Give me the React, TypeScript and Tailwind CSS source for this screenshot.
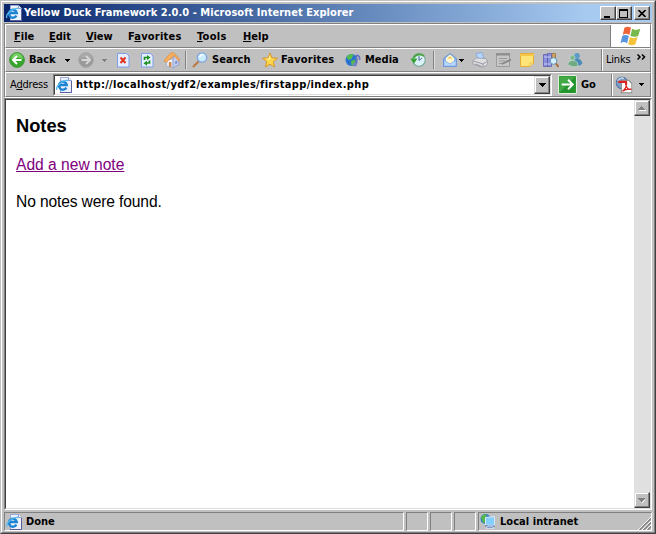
import React from "react";

type P = { children?: React.ReactNode; className?: string };

// 16px icon canvas shared by every toolbar drawing
function Icon({ children, className = "" }: P) {
  return (
    <svg viewBox="0 0 16 16" className={"h-4 w-4 shrink-0 " + className}>
      {children}
    </svg>
  );
}

function PageIcon({ className = "" }: P) {
  return (
    <Icon className={className}>
      <path d="M4.500 .5h8l3 3v12h-11z" fill="#edf1fb" stroke="#9aa8da" />
      <path d="M12.500 .5v3h3" fill="#fff" stroke="#8c9ad0" />
      <path d="M4 15.500h11.500V4" fill="none" stroke="#5a5f9e" />
      <path d="M10.400 10.600A4 4 0 1 1 10.800 8H4" fill="none" stroke="#1c84d2" strokeWidth="2.300" />
      <path d="M1 13C-1 10 7 2 12.500 3.500" fill="none" stroke="#53b8ee" strokeWidth="1.300" />
    </Icon>
  );
}

function DownTri({ className = "" }: P) {
  return (
    <svg viewBox="0 0 5 3" className={"h-[3px] w-[5px] shrink-0 " + className} shapeRendering="crispEdges">
      <path d="M0 0h5v1H0zM1 1h3v1H1zM2 2h1v1H2z" fill="currentColor" />
    </svg>
  );
}

function Round({ gray = false, className = "" }: { gray?: boolean; className?: string }) {
  return (
    <Icon className={className}>
      <circle cx="8" cy="8" r="7.400" fill={gray ? "#999" : "#36a52d"} stroke={gray ? "#aaa" : "#45973b"} />
      <path d="M2 7a6 6 0 0 1 12 0Q8 4 2 7" fill={gray ? "#adadad" : "#83da6e"} opacity=".8" />
      <path
        d={gray ? "M3.500 8h8M8 4l4 4-4 4" : "M12.500 8h-8M8 4L4 8l4 4"}
        fill="none"
        stroke={gray ? "#d6d6d6" : "#fff"}
        strokeWidth="2"
      />
    </Icon>
  );
}

function WinButton({ children, className = "" }: P) {
  return (
    <div
      className={
        "flex h-[14px] w-4 shrink-0 items-center justify-center border border-t-white border-l-white border-r-[#404040] border-b-[#404040] bg-[#c0c0c0] shadow-[inset_-1px_-1px_#808080] " +
        className
      }
    >
      {children}
    </div>
  );
}

function Divider({ className = "" }: P) {
  return <div className={"h-[18px] w-[2px] shrink-0 border-l border-[#808080] bg-[#dedede] " + className} />;
}

function Menu({ pre = "", hot, post, className = "" }: { pre?: string; hot: string; post: string; className?: string }) {
  return (
    <span className={"shrink-0 whitespace-nowrap " + className}>
      {pre}
      <u className="underline-offset-[1px]">{hot}</u>
      {post}
    </span>
  );
}

function ScrollButton({ up = false }: { up?: boolean }) {
  return (
    <div className="flex h-4 w-4 items-center justify-center border border-t-[#dedede] border-l-[#dedede] border-r-[#404040] border-b-[#404040] bg-[#c0c0c0] shadow-[inset_-1px_-1px_#808080,inset_1px_1px_#fff]">
      <svg viewBox="0 0 8 5" className="h-[5px] w-2" shapeRendering="crispEdges">
        <path d={up ? "M1 5h7v-1H1z" : "M4 4h1v1H4zM5 3h1v1H5zM6 2h1v1H6z"} fill="#fff" />
        <path d={up ? "M0 4h7V3H0zM1 3h5V2H1zM2 2h3V1H2zM3 1h1V0H3z" : "M0 0h7v1H0zM1 1h5v1H1zM2 2h3v1H2zM3 3h1v1H3z"} fill="#808080" />
      </svg>
    </div>
  );
}

function Pane({ children, className = "" }: P) {
  return (
    <div className={"flex h-[19px] items-center border border-t-[#808080] border-l-[#808080] border-r-white border-b-white " + className}>
      {children}
    </div>
  );
}

const ui = "font-['DejaVu_Sans_Condensed','DejaVu_Sans',sans-serif] text-[11px] leading-[14px] font-bold";
const plain = "font-['DejaVu_Sans_Condensed','DejaVu_Sans',sans-serif] text-[11px] leading-[14px] font-normal tracking-[-0.2px]";

export default function App() {
  return (
    <div
      className={
        "flex h-[534px] w-[656px] flex-col overflow-hidden border border-t-[#c0c0c0] border-l-[#c0c0c0] border-r-[#404040] border-b-[#404040] bg-[#c0c0c0] text-black " +
        ui
      }
    >
      <div className="flex min-h-0 flex-1 flex-col border border-t-white border-l-white border-r-[#808080] border-b-[#808080] px-[2px] pt-[2px]">
        <header className="flex h-[18px] w-[648px] shrink-0 items-center bg-linear-to-r from-[#0a246a] to-[#a6caf0] to-90% pr-[2px] pl-[2px] text-white">
          <PageIcon />
          <span className="ml-[2px] w-[331px] whitespace-nowrap tracking-[0.05px]">
            Yellow Duck Framework 2.0.0 - Microsoft Internet Explorer
          </span>
          <div className="ml-auto flex text-black">
            <WinButton>
              <i className="mt-[7px] mr-[3px] h-[2px] w-[6px] bg-black" />
            </WinButton>
            <WinButton>
              <i className="mr-px h-[9px] w-[9px] border border-t-2 border-black" />
            </WinButton>
            <WinButton className="ml-[2px]">
              <svg viewBox="0 0 8 7" className="h-[7px] w-2">
                <path d="M.5 0l7 7M7.500 0l-7 7" stroke="#000" strokeWidth="1.600" />
              </svg>
            </WinButton>
          </div>
        </header>

        {/* menu, buttons and address bands */}
        <div className="mt-px flex h-[75px] w-[648px] shrink-0 flex-col border border-t-[#808080] border-l-[#808080] border-r-white border-b-white">
          <nav className="flex h-6 shrink-0 items-center border border-t-white border-l-white border-r-[#808080] border-b-[#808080] pt-px pl-2">
            <Menu hot="F" post="ile" className="w-[35px]" />
            <Menu hot="E" post="dit" className="w-[37px]" />
            <Menu hot="V" post="iew" className="w-[42px]" />
            <Menu pre="F" hot="a" post="vorites" className="w-[69px] tracking-[0.2px]" />
            <Menu hot="T" post="ools" className="w-[46px] tracking-[0.3px]" />
            <Menu hot="H" post="elp" />
            <div className="-mt-px ml-auto flex h-[22px] w-[40px] items-center justify-center border-l border-[#808080] bg-white">
              <svg viewBox="0 0 20 18" className="h-5 w-[22px]">
                <path d="M4 1.500q3-2 6 0L8.500 8q-3-2-6 0z" fill="#ee6337" />
                <path d="M11 2.500q3 2 7.500 0l-2 6.500q-3 1.500-7 0z" fill="#79b94b" />
                <path d="M2 9q3-2 6 0l-1.500 6.500q-3-2-6 0z" fill="#5894df" />
                <path d="M9 10q3 2 7 0l-2 6.500q-3 2-6.500 0z" fill="#f5c33a" />
              </svg>
            </div>
          </nav>

          <div className="flex h-6 shrink-0 items-center border border-t-white border-l-white border-r-[#808080] border-b-[#808080] pl-[3px]">
            <Round />
            <span className="ml-1 w-9">Back</span>
            <DownTri />
            <Round gray className="ml-2" />
            <DownTri className="ml-2 text-[#808080]" />
            <Icon className="ml-2">
              <path d="M2.500 1.500h9l2.500 2.500v11H2.500z" fill="#e5edff" stroke="#7d9fe5" />
              <path d="M5.500 5.500l5 5.500m0-5.500l-5 5.500" stroke="#e2331d" strokeWidth="2" />
            </Icon>
            <Icon className="ml-2">
              <path d="M2.500 1.500h9l2.500 2.500v11H2.500z" fill="#e5edff" stroke="#7d9fe5" />
              <path d="M5.500 8V5.500H9M10.500 8.500V11H7" stroke="#18921d" strokeWidth="1.700" fill="none" />
              <path d="M8 3L11.500 5.500 8 8zM8 8.700L4.500 11.200 8 13.700z" fill="#18921d" />
            </Icon>
            <Icon className="ml-[9px] scale-105">
              <path d="M3 8v6l6 1.500V7z" fill="#f2f5ff" stroke="#8f9ecb" strokeWidth=".6" />
              <path d="M9 15.500l5.500-3V7L11 3 9 7z" fill="#c4cff0" stroke="#7d8cc0" strokeWidth=".6" />
              <path d="M0 9l6-7 3.500-1.200 6 7-1.500 1-4-5L3 10z" fill="#f6ae5c" stroke="#dd8838" strokeWidth=".6" />
              <path d="M5 10h2.500v5L5 14.400z" fill="#d08a50" />
              <path d="M11 9.500l2-.8v2.500l-2 .8z" fill="#7d8fd0" />
            </Icon>
            <Divider className="mr-[5px] ml-[5px]" />
            <Icon>
              <path d="M6.500 9.500L1 15" stroke="#bc773f" strokeWidth="2.200" />
              <circle cx="10" cy="5.500" r="4.700" fill="#c9edff" stroke="#80a5df" strokeWidth="1.300" />
              <path d="M7.500 5q1-2.500 3.500-2.200" fill="none" stroke="#fff" strokeWidth="1.300" />
            </Icon>
            <span className="ml-1 w-[50px] tracking-[0.05px]">Search</span>
            <Icon>
              <path d="M8 1l2 4.800 5.500.4-4.200 3.500 1.400 5.300L8 12.200 3.300 15l1.400-5.300L.5 6.200 6 5.800z" fill="#fbd74e" stroke="#d8952c" />
              <path d="M8 3v5l-4-1.200 2.800-.3z" fill="#fff3a8" />
            </Icon>
            <span className="ml-[3px] w-[64px] tracking-[0.2px]">Favorites</span>
            <Icon>
              <circle cx="6.500" cy="8" r="6" fill="#2872d2" />
              <path d="M1.500 5q4-5 7-2l-2 4-3 1zM6 9l4.500-1.500L10 12l-3.500 1.500z" fill="#55bd47" />
              <path d="M11.500 3v9M11.500 3q4 1 3 5" fill="none" stroke="#6572bd" strokeWidth="1.600" />
              <circle cx="10" cy="12.500" r="2" fill="#7582cb" />
            </Icon>
            <span className="ml-1 w-[45px]">Media</span>
            <Icon>
              <circle cx="9" cy="8" r="6.300" fill="#dcf1f8" stroke="#7fae9c" strokeWidth="1.300" />
              <path d="M9 4v4.500l3-2.500" stroke="#466b9b" fill="none" />
              <path d="M14 4A7 7 0 0 0 3.500 6" stroke="#4aa33e" strokeWidth="2" fill="none" />
              <path d="M.3 6.500h7.200L4 11.500z" fill="#35a330" />
            </Icon>
            <Divider className="mr-[7px] ml-[7px]" />
            <Icon>
              <path d="M1.500 6.500L8 1.500l6.500 5v8h-13z" fill="#8cb7ef" stroke="#6d93d1" />
              <path d="M4 6l4-3.500L12 6v4l-4 2-4-2z" fill="#fff8d0" />
              <path d="M5.500 6.500l2.500-2.300 2.500 2.300z" fill="#f5be55" />
              <path d="M2 8l6 4 6-4v6H2z" fill="#b8d8ff" stroke="#7ba6e4" strokeWidth=".7" />
            </Icon>
            <DownTri className="ml-px" />
            <Icon className="ml-2">
              <path d="M4 1.500l6-1 2 6-6 1z" fill="#b5d7ff" stroke="#7da3dc" strokeWidth=".8" />
              <path d="M1 8.500L4 6l10 .5 1.500 3v3L11 15.500 1 12z" fill="#dedee2" stroke="#9898a0" strokeWidth=".8" />
              <path d="M1.500 9l9.500 3 4-2.500M11 12v3M3.500 12l6 2.300" stroke="#9898a0" fill="none" />
            </Icon>
            <Icon className="ml-[7px]">
              <path d="M1.500 1.500h13v13h-13z" fill="#c6c6c6" stroke="#9c9c9c" />
              <path d="M1 2.500h14" stroke="#8c8c8c" strokeWidth="2" />
              <path d="M4 6.500h8M4 9h6M4 11.500h3" stroke="#999" />
              <path d="M7 12l9-4.500" stroke="#858585" strokeWidth="1.600" />
            </Icon>
            <Icon className="ml-2">
              <path d="M1.500 1.500h13V11L11 14.500H1.500z" fill="#ffe477" stroke="#e5ad35" />
              <path d="M1 2h14v2H1z" fill="#f7c646" />
              <path d="M11 14.500V11h3.500z" fill="#fff5b5" stroke="#e5ad35" strokeWidth=".7" />
            </Icon>
            <Icon className="ml-2">
              <path d="M.5 2.500h4v12h-4zM4.500 1.500h4v13h-4z" fill="#8a90de" stroke="#5a60b0" strokeWidth=".8" />
              <path d="M1 5h7M1 12h7" stroke="#c6c7f1" />
              <path d="M9 1.500h3.500V9H9z" fill="#d5a25c" stroke="#8d7040" strokeWidth=".7" />
              <circle cx="10.500" cy="9" r="3.300" fill="#d4f1ff" stroke="#6792be" />
              <path d="M13 11.500l2.500 3.500" stroke="#a77038" strokeWidth="2" />
            </Icon>
            <Icon className="ml-2">
              <circle cx="10" cy="3.800" r="2.900" fill="#5d9cc6" />
              <path d="M6 13q0-7 4-6.500 4 0 5.500 5l-2.500 2z" fill="#4c8ab8" />
              <circle cx="5.500" cy="5.800" r="2.500" fill="#79b58a" stroke="#d0e6d6" strokeWidth=".5" />
              <path d="M.5 12.500Q2 8 6 8.500q5 0 5 6-6 1.500-10.500-2z" fill="#70aa82" stroke="#d0e6d6" strokeWidth=".6" />
            </Icon>
            <div className="ml-auto flex h-[22px] items-center border-l border-[#808080] pr-[3px]">
              <div className="flex h-[22px] w-[45px] items-center border-l border-white pl-[3px]">
                <span className={plain + " w-[31px]"}>Links</span>
                <svg viewBox="0 0 9 6" className="mb-[7px] h-[6px] w-[9px] shrink-0">
                  <path d="M.5.5L3 3 .5 5.500M5 .5L7.500 3 5 5.500" fill="none" stroke="#000" strokeWidth="1.500" />
                </svg>
              </div>
            </div>
          </div>

          <div className="flex h-[25px] shrink-0 items-center border border-t-white border-l-white border-r-[#808080] border-b-[#808080] pl-1">
            <span className={plain + " w-[43px] shrink-0"}>
              A<u className="underline-offset-[1px]">d</u>dress
            </span>
            <div className="flex h-[22px] w-[499px] shrink-0 items-center border border-t-[#808080] border-l-[#808080] border-r-white border-b-white">
              <div className="flex h-5 w-[497px] items-center border border-t-[#404040] border-l-[#404040] border-r-[#dedede] border-b-[#dedede] bg-white pl-px">
                <PageIcon />
                <span className="ml-1 whitespace-nowrap tracking-[0.32px]">http://localhost/ydf2/examples/firstapp/index.php</span>
                <div className="ml-auto flex h-[18px] w-4 items-center justify-center border border-t-[#dedede] border-l-[#dedede] border-r-[#404040] border-b-[#404040] bg-[#c0c0c0] shadow-[inset_-1px_-1px_#808080,inset_1px_1px_#fff]">
                  <svg viewBox="0 0 7 4" className="h-1 w-[7px]" shapeRendering="crispEdges">
                    <path d="M0 0h7v1H0zM1 1h5v1H1zM2 2h3v1H2zM3 3h1v1H3z" />
                  </svg>
                </div>
              </div>
            </div>
            <svg viewBox="0 0 18 18" className="ml-[6px] h-[19px] w-[19px] shrink-0">
              <rect x=".5" y=".5" width="17" height="17" rx="1" fill="#23952c" stroke="#e1f0df" />
              <path d="M1.500 16.500v-15h15z" fill="#43a846" />
              <path d="M3.500 9h10M9.500 4.500L14 9l-4.500 4.500" fill="none" stroke="#fff" strokeWidth="1.800" />
            </svg>
            <span className="ml-[4px]">Go</span>
            <div className="ml-auto flex h-[22px] w-[39px] shrink-0 items-center border-l border-[#808080]">
              <div className="flex h-[22px] w-full items-center border-l border-white pl-[3px]">
                <Icon className="scale-105">
                  <circle cx="6" cy="6" r="5.500" fill="#7b9fc7" stroke="#4e729f" />
                  <path d="M2 4q3-4 6-2" stroke="#c3dcef" strokeWidth="1.500" fill="none" />
                  <path d="M5.500 3.500h7l3 3v9h-10z" fill="#fff" stroke="#888" />
                  <path d="M2.500 4h8.500v4H9V6H2.500z" fill="#db2421" />
                  <path d="M6.500 14q4-3 3.500-6 1 5 5 4-5-.5-8.500 2z" fill="none" stroke="#db2421" strokeWidth="1.200" />
                </Icon>
                <DownTri className="ml-[7px]" />
              </div>
            </div>
          </div>
        </div>

        {/* page view */}
        <div className="flex h-[412px] w-[648px] shrink-0 border border-t-[#808080] border-l-[#808080] border-r-white border-b-white">
          <div className="flex min-w-0 flex-1 border border-t-[#404040] border-l-[#404040] border-r-[#dedede] border-b-[#dedede] bg-white">
            <main className="flex-1 pt-[15px] pl-[10px] font-['Liberation_Sans',Arial,sans-serif] text-[15.600px] leading-[18px] font-normal">
              <h1 className="text-[18.300px] leading-[22px] font-bold">Notes</h1>
              <p className="mt-[19px]">
                <a className="text-[#800080] underline underline-offset-[1px]">Add a new note</a>
              </p>
              <p className="mt-[19px] tracking-[-0.13px]">No notes were found.</p>
            </main>
            <div className="flex w-4 shrink-0 flex-col justify-between bg-[#e0e0e0]">
              <ScrollButton up />
              <ScrollButton />
            </div>
          </div>
        </div>

        <footer className="mt-[2px] flex h-[19px] w-[648px] shrink-0 gap-[2px]">
          <Pane className="w-[400px]">
            <PageIcon className="ml-px" />
            <span className="ml-1">Done</span>
          </Pane>
          <Pane className="w-[22px]" />
          <Pane className="w-[22px]" />
          <Pane className="w-[22px]" />
          <Pane className="flex-1">
            <Icon className="ml-px">
              <circle cx="5.500" cy="5" r="5" fill="#3279cf" />
              <path d="M1 3q3-4 6-2L5 5l1 3-3 1z" fill="#54b94a" />
              <path d="M5.500 3.500l9-1v9l-9-.5z" fill="#82ceff" stroke="#dce9f5" />
              <path d="M5 11.800l10 .4" stroke="#4a6cb0" />
              <path d="M8 12h4l2 2.500H6z" fill="#7e9ccc" stroke="#e3eefa" strokeWidth=".7" />
            </Icon>
            <span className="ml-1 whitespace-nowrap tracking-[0.05px]">Local intranet</span>
            <svg viewBox="0 0 13 13" className="mt-auto ml-auto h-[13px] w-[13px]">
              <path d="M0 13L13 0M4 13l9-9M8 13l5-5" stroke="#fff" />
              <path d="M1.500 13L13 1.500M5.500 13L13 5.500M9.500 13L13 9.500" stroke="#808080" strokeWidth="1.300" />
            </svg>
          </Pane>
        </footer>
      </div>
    </div>
  );
}
